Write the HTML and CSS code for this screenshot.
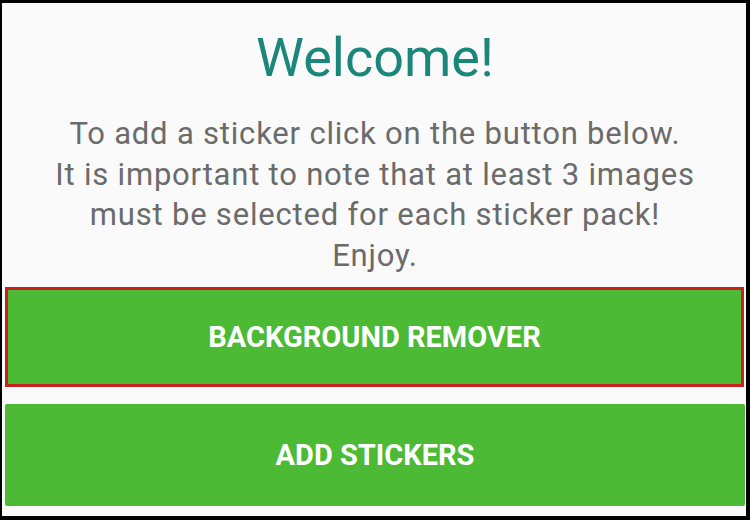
FILE: index.html
```html
<!DOCTYPE html>
<html lang="en">
<head>
  <meta charset="UTF-8">
  <meta name="viewport" content="width=device-width, initial-scale=1.0">
  <title>Sticker Maker</title>
  <link rel="stylesheet" href="styles.css">
</head>
<body>
  <div class="frame">
    <div class="screen">
      <h1 class="title">Welcome!</h1>
      <p class="intro">
        To add a sticker click on the button below.<br>
        It is important to note that at least 3 images<br>
        must be selected for each sticker pack!<br>
        Enjoy.
      </p>
      <div class="actions">
        <button class="button button-selected">BACKGROUND REMOVER</button>
        <button class="button">ADD STICKERS</button>
      </div>
    </div>
  </div>
</body>
</html>
```

FILE: styles.css
```css
body {
  margin: 0;
  padding: 0;
  font-family: Roboto, "Liberation Sans", sans-serif;
  background-color: #000000;
}

.frame {
  width: 750px;
  height: 520px;
  box-sizing: border-box;
  border-style: solid;
  border-color: #000000;
  border-width: 3px 4px 4px 2px;
  background-color: #fafafa;
}

.screen {
  height: 100%;
  display: flex;
  flex-direction: column;
  padding: 0 1px 10px 3px;
  box-sizing: border-box;
}

.title {
  margin: 23px 0 0;
  font-size: 54px;
  font-weight: 400;
  line-height: 64px;
  color: #1b877b;
  text-align: center;
}

.intro {
  margin: 24px 0 0;
  font-size: 31px;
  letter-spacing: 0.8px;
  line-height: 40.5px;
  color: #6b6b6b;
  text-align: center;
}

.actions {
  margin-top: auto;
  display: flex;
  flex-direction: column;
  gap: 17px;
}

.button {
  height: 102px;
  border: none;
  border-radius: 2px;
  background-color: #4cba35;
  color: #ffffff;
  font-family: Roboto, "Liberation Sans", sans-serif;
  font-size: 29px;
  font-weight: 700;
  cursor: pointer;
}

.button-selected {
  height: 100px;
  margin-right: 1px;
  border: 3px solid #c9211e;
  border-radius: 0;
}
```
